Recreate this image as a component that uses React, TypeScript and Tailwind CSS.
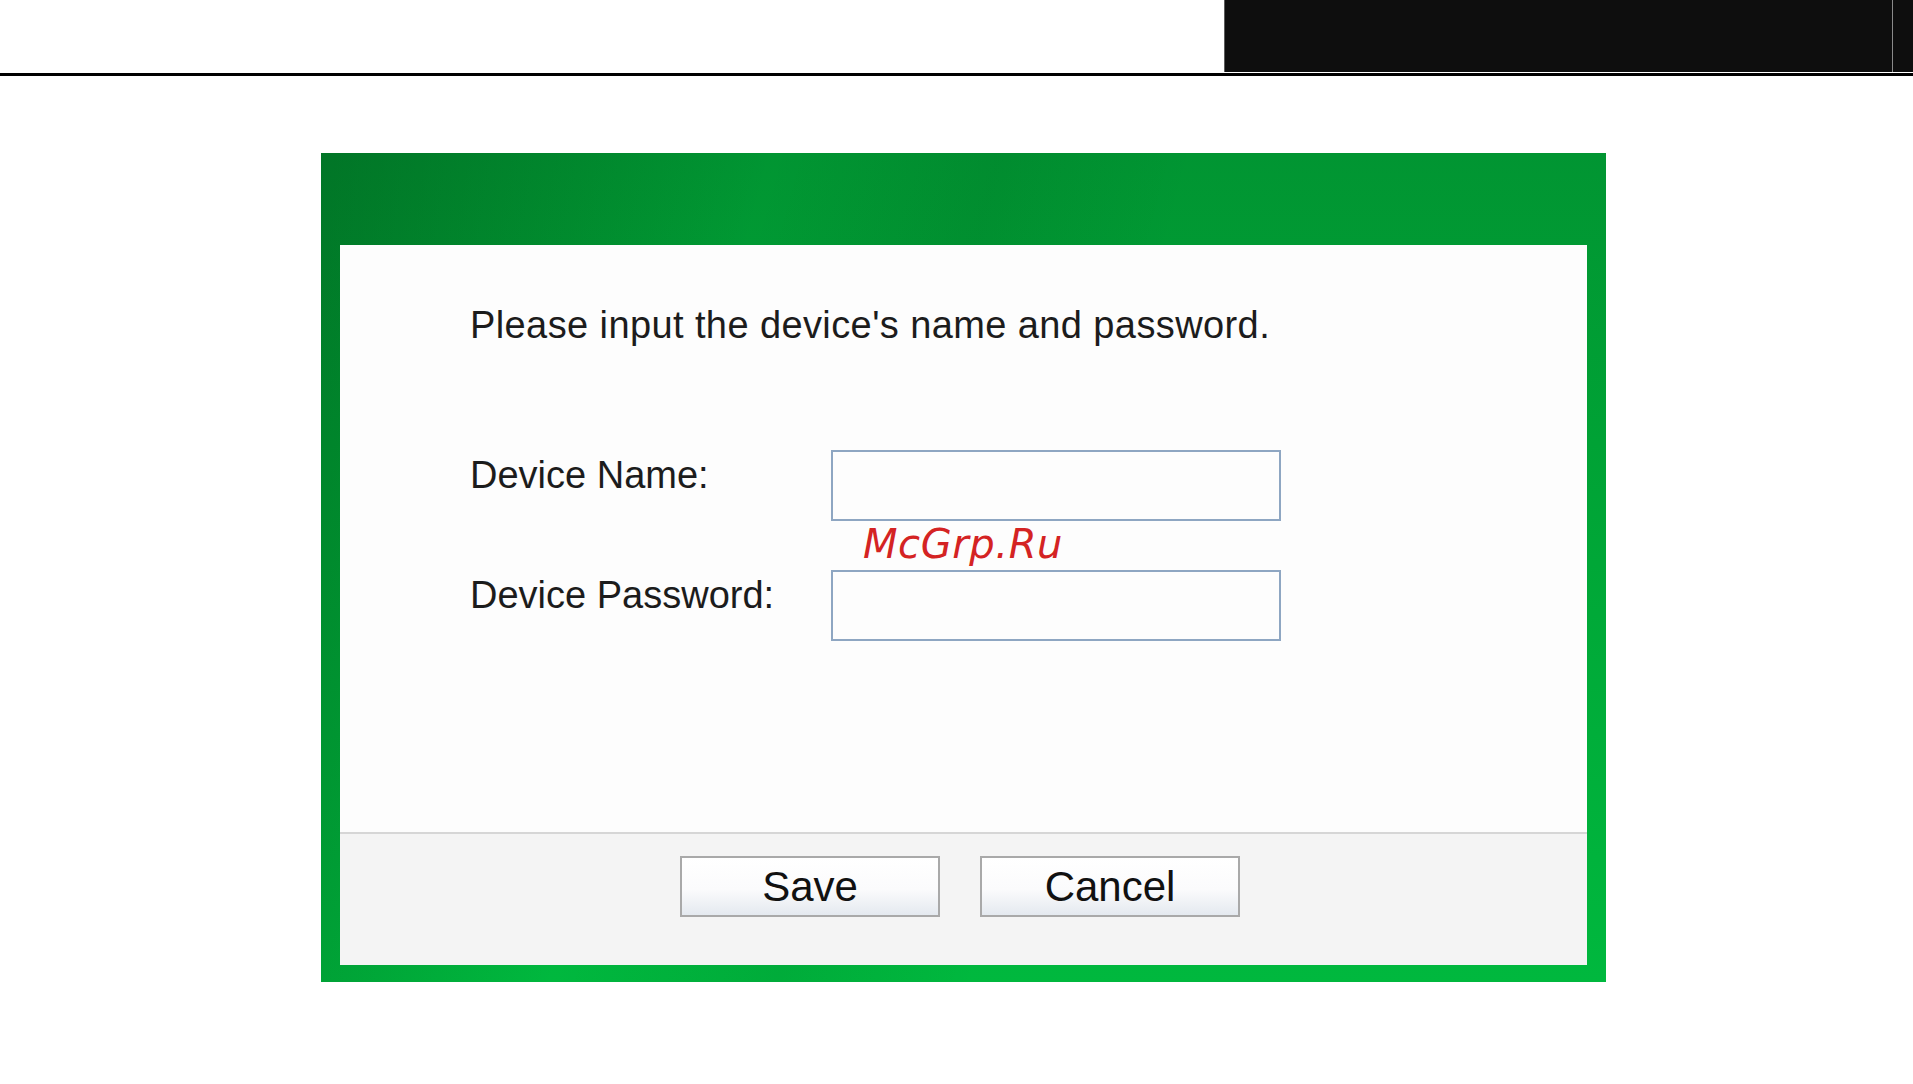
import React from 'react'

function TopStrip() {
  return (
    <div>
      <div className="flex h-[72px] justify-end">
        <div className="flex w-[689px] border-l border-[#5c5c5c] bg-[#0e0e0e]">
          <div className="flex-1" />
          <div className="w-px bg-[#8a8a8a]" />
          <div className="w-[20px]" />
        </div>
      </div>
      <div className="h-px bg-white" />
      <div className="h-[3px] bg-black" />
    </div>
  )
}

function Field({ label }: { label: string }) {
  return (
    <div className="flex items-start">
      <div className="mt-[6px] w-[361px] text-[38px] leading-[38px] text-[#1c1c1c]">{label}</div>
      <input
        type="text"
        className="h-[71px] w-[450px] border-2 border-[#8ea6c2] bg-[#fdfdfd] outline-none"
      />
    </div>
  )
}

function Button({ children }: { children: React.ReactNode }) {
  return (
    <button className="flex h-[61px] w-[260px] items-center justify-center border-2 border-[#a9a9a9] bg-[linear-gradient(to_bottom,#ffffff_0%,#fbfbfc_55%,#e4e9ef_100%)] text-[42px] leading-none text-[#111]">
      {children}
    </button>
  )
}

export default function App() {
  return (
    <div
      className="relative min-h-[1084px] bg-white"
      style={{ fontFamily: '"Liberation Sans", Arial, sans-serif' }}
    >
      <TopStrip />

      <div className="ml-[321px] mt-[77px] w-[1285px] bg-[linear-gradient(105deg,rgba(0,50,15,0.32)_0%,rgba(0,40,10,0.12)_18%,rgba(0,0,0,0)_30%,rgba(0,30,10,0.08)_45%,rgba(0,0,0,0)_58%,rgba(0,0,0,0)_100%),linear-gradient(to_bottom,#019532_0%,#00a235_35%,#00ae3a_70%,#00b83e_100%)] pb-[17px] pl-[19px] pr-[19px] pt-[92px]">
        <div className="flex flex-col bg-[#fdfdfd]">
          <div className="flex h-[587px] flex-col pl-[130px] pt-[61px]">
            <div className="text-[38px] leading-[38px] tracking-[0.4px] text-[#1c1c1c]">
              Please input the device's name and password.
            </div>
            <div className="mt-[106px] flex flex-col gap-[49px]">
              <Field label="Device Name:" />
              <Field label="Device Password:" />
            </div>
          </div>
          <div className="h-[2px] bg-[#d6d6d6]" />
          <div className="flex h-[131px] justify-center gap-[40px] bg-[#f4f4f4] pr-[7px] pt-[22px]">
            <Button>Save</Button>
            <Button>Cancel</Button>
          </div>
        </div>
      </div>

      <div
        className="absolute left-[863px] top-[524px] text-[40px] italic leading-[40px] tracking-[0.6px] text-[#d42323]"
        style={{ fontFamily: '"DejaVu Sans", sans-serif' }}
      >
        McGrp.Ru
      </div>
    </div>
  )
}
